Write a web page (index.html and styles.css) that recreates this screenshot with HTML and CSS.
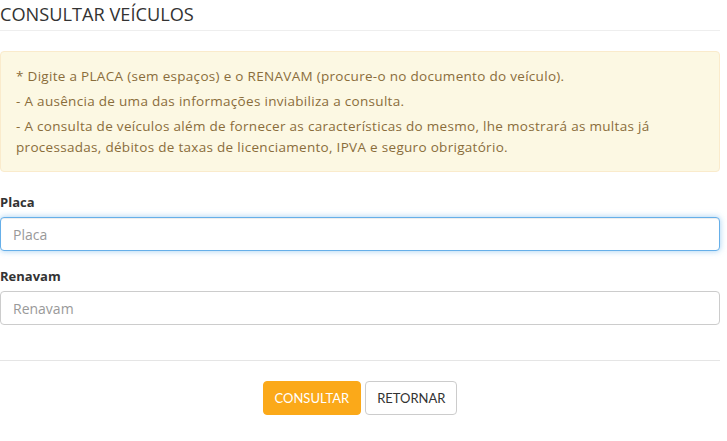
FILE: index.html
```html
<!DOCTYPE html>
<html lang="pt-BR">
<head>
<meta charset="utf-8">
<title>Consultar Veículos</title>
<link rel="stylesheet" href="styles.css">
</head>
<body>
<div class="page">
  <h1 class="page-title">CONSULTAR VEÍCULOS</h1>

  <div class="alert">
    <p>* Digite a PLACA (sem espaços) e o RENAVAM (procure-o no documento do veículo).</p>
    <p>- A ausência de uma das informações inviabiliza a consulta.</p>
    <p>- A consulta de veículos além de fornecer as características do mesmo, lhe mostrará as multas já processadas, débitos de taxas de licenciamento, IPVA e seguro obrigatório.</p>
  </div>

  <form class="form">
    <div class="field">
      <label class="label" for="placa">Placa</label>
      <input class="input input-focus" id="placa" type="text" placeholder="Placa">
    </div>
    <div class="field">
      <label class="label" for="renavam">Renavam</label>
      <input class="input" id="renavam" type="text" placeholder="Renavam">
    </div>
    <div class="actions">
      <button type="button" class="btn btn-primary">CONSULTAR</button>
      <button type="button" class="btn btn-default">RETORNAR</button>
    </div>
  </form>
</div>
</body>
</html>
```
FILE: styles.css
```css
* { box-sizing: border-box; }

body {
  margin: 0;
  background: #fff;
  font-family: "Open Sans", "Noto Sans", sans-serif;
  color: #333;
}

.page {
  width: 720px;
}

.page-title {
  margin: 0;
  padding-top: 3px;
  height: 31px;
  font-size: 18.2px;
  font-weight: 400;
  line-height: 22px;
  color: #333;
  border-bottom: 1px solid #eee;
}

.alert {
  margin-top: 20px;
  padding: 14px 15px 13px 15px;
  background: #fcf8e3;
  border: 1px solid #faebcc;
  border-radius: 4px;
  color: #8a6d3b;
  font-size: 13.5px;
  letter-spacing: 0.3px;
  line-height: 21px;
}

.alert p { margin: 0 0 4px; }
.alert p:last-child { margin-bottom: 0; }

.form { margin-top: 21px; }

.field { margin-bottom: 16px; }

.label {
  display: block;
  font-size: 13px;
  font-weight: 700;
  line-height: 18px;
  margin-bottom: 6px;
  color: #333;
}

.input {
  display: block;
  width: 100%;
  height: 34px;
  padding: 6px 12px;
  font-family: inherit;
  font-size: 14px;
  color: #555;
  background: #fff;
  border: 1px solid #ccc;
  border-radius: 4px;
  outline: none;
}

.input::placeholder { color: #999; }

.input-focus {
  border-color: #66afe9;
  box-shadow: inset 0 1px 1px rgba(0,0,0,.075), 0 0 6px rgba(102,175,233,.6);
}

.actions {
  margin-top: 35px;
  padding-top: 20px;
  border-top: 1px solid #e5e5e5;
  display: flex;
  justify-content: center;
  gap: 4px;
}

.btn {
  height: 34px;
  padding: 0 11px;
  font-family: "Lato", sans-serif;
  font-size: 13px;
  border-radius: 4px;
  border: 1px solid transparent;
  cursor: pointer;
}

.btn-primary {
  background: #fba919;
  border-color: #fba919;
  color: #fff;
}

.btn-default {
  background: #fff;
  border-color: #ccc;
  color: #333;
}
```
